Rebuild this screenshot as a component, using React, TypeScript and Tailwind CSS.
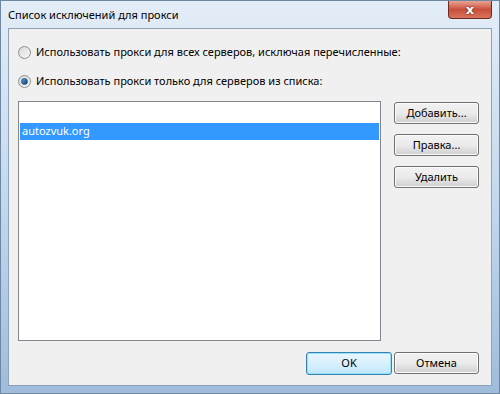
import React from "react";

const font = { fontFamily: '"Noto Sans", "Open Sans", sans-serif' };

function Radio({ checked }: { checked?: boolean }) {
  return (
    <div className="w-[13px] h-[13px] rounded-full border border-[#8e8f8f] bg-gradient-to-br from-[#d8d8d8] to-[#f8f8f8] flex items-center justify-center shrink-0">
      {checked && (
        <div className="w-[7px] h-[7px] rounded-full bg-gradient-to-br from-[#5fa3d9] to-[#0b3c6a] border border-[#1d5a8c]" />
      )}
    </div>
  );
}

function Btn({ children, def }: { children: React.ReactNode; def?: boolean }) {
  return (
    <div
      className={
        "rounded-[3px] flex items-center justify-center text-[11px] text-black " +
        (def
          ? "w-[86px] h-[23px] border border-[#3c7fb1] shadow-[inset_0_0_0_1px_#8ee3f9] bg-gradient-to-b from-[#eaf6fd] via-[#d9f0fc] to-[#bee6fd]"
          : "w-[85px] h-[22px] border border-[#707070] shadow-[inset_0_0_0_1px_#fcfcfc] bg-gradient-to-b from-[#f2f2f2] via-[#ebebeb] to-[#cfcfcf]")
      }
    >
      {children}
    </div>
  );
}

export default function App() {
  return (
    <div
      style={font}
      className="w-[500px] h-[394px] relative overflow-hidden bg-gradient-to-b from-[#e3edf7] via-[#c4d9ee] to-[#9fbcdc] border border-[#6e87a3] flex flex-col px-[7px] pb-[7px]"
    >
      <div className="h-[27px] flex items-start pt-[4px] shrink-0">
        <span className="text-[11px] text-black leading-[20px]">Список исключений для прокси</span>
      </div>
      <div className="absolute top-0 right-[7px] w-[44px] h-[18px] rounded-b-[4px] border border-t-0 border-[#6b2a23] bg-gradient-to-b from-[#e8a493] via-[#c94f3c] to-[#d8735b] flex items-center justify-center">
        <span className="text-white font-bold text-[13px] leading-none [text-shadow:0_0_2px_#3a1010]" style={{ fontFamily: '"DejaVu Sans", sans-serif' }}>x</span>
      </div>
      <div className="flex-1 bg-[#f0f0f0] border border-[#8da2b8] flex flex-col pl-[9px] pr-[12px] pt-[14px]">
        <div className="h-[18px] flex items-center gap-[5px]">
          <Radio />
          <span className="text-[11px] text-black">Использовать прокси для всех серверов, исключая перечисленные:</span>
        </div>
        <div className="h-[18px] flex items-center gap-[5px] mt-[11px]">
          <Radio checked />
          <span className="text-[11px] text-black">Использовать прокси только для серверов из списка:</span>
        </div>
        <div className="flex mt-[11px] gap-[13px]">
          <div className="w-[365px] h-[240px] bg-white border border-[#828790] flex flex-col pt-[21px] px-[1px]">
            <div className="h-[17px] bg-[#3399ff] text-white text-[11px] flex items-center pl-[2px]">autozvuk.org</div>
          </div>
          <div className="flex flex-col gap-[10px] pt-[1px]">
            <Btn>Добавить...</Btn>
            <Btn>Правка...</Btn>
            <Btn>Удалить</Btn>
          </div>
        </div>
        <div className="flex justify-end gap-[2px] mt-[11px]">
          <Btn def>OK</Btn>
          <Btn>Отмена</Btn>
        </div>
      </div>
    </div>
  );
}
